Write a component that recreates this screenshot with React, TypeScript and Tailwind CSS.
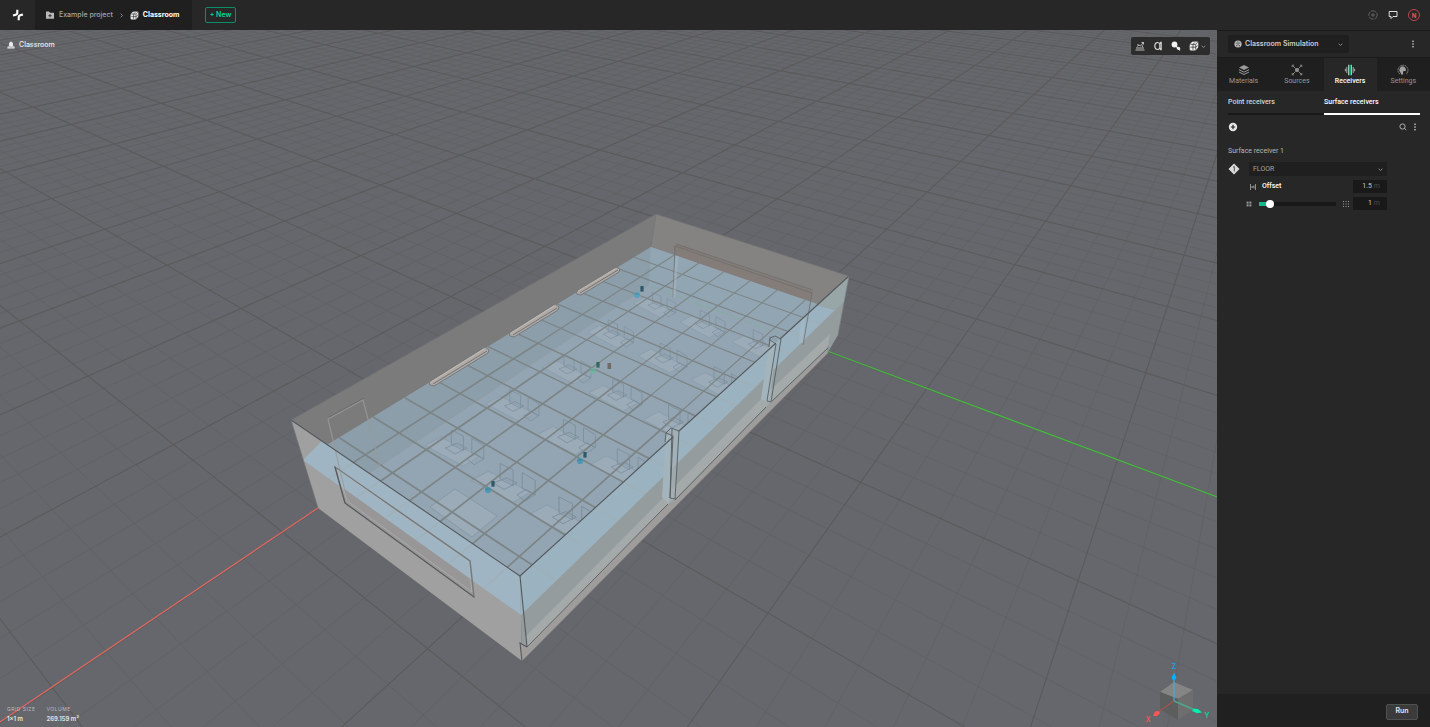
import React, { useState } from "react";

type Pt = [number, number];

/* ---------- ground plane projection (metres to canvas units) ---------- */
const depth = (u: number, v: number) => 1 - 0.0235 * u - 0.01808 * v;
const ground = (u: number, v: number): Pt => {
  const d = depth(u, v);
  return [(649 - 31.06 * u + 11.02 * v) / d, (285.3 + 3.96 * u + 3.33 * v) / d];
};

/* ---------- receiver plane projection (0..1 on both sides) ---------- */
const plane = (u: number, v: number): Pt => {
  const d = 1 - 0.3409 * u - 0.1284 * v;
  return [(651 - 451.3 * u + 76.8 * v) / d, (247 + 56.2 * u + 23.2 * v) / d];
};

const seg = (a: Pt, b: Pt) =>
  `M${a[0].toFixed(1)} ${a[1].toFixed(1)}L${b[0].toFixed(1)} ${b[1].toFixed(1)}`;

const FAR = -70;
const minor: string[] = [];
const major: string[] = [];
for (let k = -70; k <= 40; k++) {
  const maxV = Math.min(60, (0.92 - 0.0235 * k) / 0.01808);
  const maxU = Math.min(60, (0.92 - 0.01808 * k) / 0.0235);
  const out = k % 5 === 0 ? major : minor;
  if (maxV > FAR) out.push(seg(ground(k, FAR), ground(k, maxV)));
  if (maxU > FAR) out.push(seg(ground(FAR, k), ground(maxU, k)));
}

const planeLines: { d: string; w: number }[] = [];
for (let i = 1; i < 14; i++) {
  planeLines.push({ d: seg(plane(i / 14, 0), plane(i / 14, 1)), w: 1 + i * 0.06 });
}
for (let j = 1; j < 7; j++) {
  planeLines.push({ d: seg(plane(0, j / 7), plane(0.5, j / 7)), w: 1.1 });
  planeLines.push({ d: seg(plane(0.5, j / 7), plane(1, j / 7)), w: 1.7 });
}

const desks: [number, number, number][] = [
  [655, 305, 0.86], [703, 324, 0.92], [756, 344, 0.96],
  [611, 334, 0.94], [663, 358, 1], [717, 382, 1.04],
  [567, 369, 1], [616, 395, 1.08], [672, 422, 1.14],
  [513, 406, 1.08], [567, 437, 1.18], [621, 467, 1.22],
  [455, 448, 1.2], [504, 483, 1.3], [563, 517, 1.34],
];

const Desk = ({ x, y, s }: { x: number; y: number; s: number }) => (
  <g transform={`translate(${x} ${y}) scale(${s})`} stroke="#778896" strokeWidth=".7" strokeOpacity=".8" fill="none">
    <path d="M-25 -2L-12 -9L20 7L7 15Z" fill="#a4b2bd" fillOpacity=".5" strokeOpacity=".4" />
    <path d="M-8 0L2 -4L10 0L0 5Z" />
    <path d="M-3 -15L7 -10V2L-3 -3Z" />
    <path d="M14 -8L24 -2V9L14 4Z" />
    <path d="M10 9L17 5L24 9L16 14Z" />
  </g>
);

const Source = ({ x, y, c, d }: { x: number; y: number; c: string; d: string }) => (
  <g>
    <circle cx={x} cy={y} r="3.1" fill={c} />
    <path d={`M${x - 2.6} ${y - 1}h5`} stroke={d} strokeWidth=".7" opacity=".5" />
    <rect x={x + 3.4} y={y - 9} width="3.2" height="5.600" fill={d} />
  </g>
);

const Wall = ({ p, fill }: { p: string; fill: string }) => <polygon points={p} fill={fill} />;

const Scene = () => (
  <svg
    className="absolute inset-0 h-full w-full"
    viewBox="0 30 1217 697"
    preserveAspectRatio="xMidYMid slice"
    role="img"
    aria-label="Classroom model"
  >
    <defs>
      <clipPath id="opening">
        <polygon points="291,420 656,214 849,276 520,576" />
      </clipPath>
      <clipPath id="front">
        <polygon points="291,420 520,576 849,276 849,420 522,661 291,500" />
      </clipPath>
    </defs>
    <rect x="0" y="30" width="1217" height="697" fill="#66676c" />
    <path d={minor.join("")} stroke="#5e5f5f" strokeWidth="1" strokeOpacity=".6" fill="none" />
    <path d={major.join("")} stroke="#575858" strokeWidth="1.1" strokeOpacity=".8" fill="none" />

    <path d="M318 508L0 722" stroke="#e06860" strokeWidth="1.2" />
    <path d="M827 351L1217 497" stroke="#45b83e" strokeWidth="1.2" />

    {/* back walls */}
    <Wall p="291,420 656,214 651,247 323,448" fill="#7b7b7b" />
    <Wall p="656,214 849,276 818,305 651,247" fill="#848382" />
    <Wall p="673,246 678,244 813,291 809,302 677,256" fill="#847c78" />
    <path d="M656 214L651 247" stroke="#777" strokeWidth=".8" />

    {/* inside, seen through the receiver plane */}
    <Wall p="651,247 303,460 521,615 835,310" fill="#93a5b2" />
    <Wall p="651,247 322,448 350,487 649,286" fill="#8b9eaa" />
    <Wall p="651,247 818,305 790,332 649,286" fill="#91a6b2" />
    <path d="M649 286L350 487" stroke="#a3a3ab" strokeWidth=".7" strokeOpacity=".7" />
    <path d="M649 286L800 341" stroke="#86ab9e" strokeWidth="1" strokeOpacity=".8" />
    <polygon points="430,507 455,489 497,516 472,537" fill="#a4b2bd" fillOpacity=".5" stroke="#7e8f9c" strokeWidth=".6" />
    {desks.map(([x, y, s]) => (
      <Desk key={`${x}-${y}`} x={x} y={y} s={s} />
    ))}
    <g clipPath="url(#opening)" stroke="#7c8486" fill="none">
      {planeLines.map((l) => (
        <path key={l.d} d={l.d} strokeWidth={l.w} />
      ))}
    </g>

    {/* front wall */}
    <Wall p="291,420 520,576 522,661 318,508" fill="#a0a0a0" />
    <Wall p="303,460 322,441 520,576 521,615" fill="#9fb5c3" />
    <Wall p="343,488 473,581 474,597 345,503" fill="#989696" />

    {/* right wall */}
    <Wall p="520,576 849,276 838,335 828,352 522,661" fill="#949c9d" />
    <Wall p="520,576 817,305 835,310 521,615" fill="#9bb3c1" />
    <Wall p="817,305 849,276 844,302 835,310" fill="#98a6a8" />
    <Wall p="525,637 663,498 766,394 830,334 828,347 772,401 766,407 674,500 668,504 527,647" fill="#a4a9aa" />
    <Wall p="520,643 527,647 668,504 675,500 828,347 828,353 522,661" fill="#9f9d9b" />
    <g clipPath="url(#front)" stroke="#a2adb0" fill="none" strokeWidth="1.2" strokeOpacity=".75">
      {planeLines.map((l) => (
        <path key={l.d} d={l.d} />
      ))}
    </g>

    {/* doors, boards and pillars */}
    <path d="M328 419L363 400L380 466M328 419L347 500" stroke="#989a9a" strokeWidth="1.2" strokeOpacity=".8" fill="none" />
    <path d="M329 417L364 398" stroke="#5f6163" strokeWidth=".6" />
    <path d="M335 467L470 561L474 597L345 503Z" stroke="#77797a" strokeWidth="1.500" fill="none" />
    <path d="M335 467L345 503L474 597" stroke="#555759" strokeWidth="1" fill="none" />
    <path d="M338 470L468 562L472 592L347 501Z" stroke="#b0b4b5" strokeWidth=".7" fill="none" />
    <path d="M673 297L675 246L812 293L803 345M676 244L813 290" stroke="#6d6d6c" strokeWidth=".8" fill="none" />
    <path d="M677 256L674 297" stroke="#a7b8c2" strokeWidth="3" strokeOpacity=".5" />
    <path d="M803 318L801 343" stroke="#a7bccb" strokeWidth="4" strokeOpacity=".5" />

    <polygon points="666,433 673,437 669,504 662,497" fill="#a4b4bc" />
    <polygon points="671,429 679,431 675,499 670,498 673,437 666,433" fill="#a5afb3" fillOpacity=".7" />
    <path d="M666 433L671 428L679 431L675 499L670 498L673 436L666 433L665 442M672 429L670 498" stroke="#555c60" strokeWidth=".9" fill="none" />
    <polygon points="770,340 777,342 769,403 761,399" fill="#a4b4bc" />
    <path d="M769 347L770 338L775 336L781 339L771 402L767 401L776 344L770 340" stroke="#555c60" strokeWidth=".9" fill="none" />

    <g stroke="#54585b" strokeWidth="1.1" fill="none">
      <path d="M291 420L520 576L673 437M679 431L776 343M780 339L849 276" />
      <path d="M520 576L527 647M522 661L520 643L527 647" />
      <path d="M527 647L668 504M675 500L766 407M772 401L828 348" strokeWidth=".8" />
      <path d="M522 661L828 353V346M849 276L838 335" strokeWidth=".7" stroke="#777b7c" />
      <path d="M291 420L318 508M291 420L656 214L849 276" strokeWidth=".7" stroke="#707172" />
    </g>

    {/* wall-mounted lights */}
    {["429,382 485,347 489,350 488,353 434,386 430,385", "509,333 555,304 559,307 558,310 514,337 510,336", "576,292 616,267 620,269 619,272 581,295 577,294"].map((p) => (
      <polygon key={p} points={p} fill="#b0aaa6" stroke="#6f7375" strokeWidth=".9" />
    ))}
    <path d="M433 384L487 351M513 335L557 308M580 293L618 270" stroke="#5f6365" strokeWidth=".8" />
    <path d="M431 382L484 349M511 333L554 306M578 291L615 269" stroke="#c2bcb6" strokeWidth=".9" />

    <Source x={637} y={295} c="#5ba2be" d="#2d5867" />
    <Source x={593} y={371} c="#76b3a4" d="#31685f" />
    <rect x="607.500" y="363" width="3.600" height="6" fill="#6e6c68" />
    <Source x={580} y={461} c="#4d98b2" d="#2d5867" />
    <Source x={488} y={490} c="#4d98b2" d="#2d5867" />

    {/* orientation gizmo */}
    <polygon points="1174,682 1193,690 1178,699 1160,692" fill="#858585" />
    <polygon points="1160,692 1178,699 1178,720 1160,709" fill="#5c5d5d" />
    <polygon points="1178,699 1193,690 1193,710 1178,720" fill="#6e6e6e" />
    <path d="M1174 701V679" stroke="#4ba9d4" strokeWidth="1.2" />
    <path d="M1174 672.500L1176.400 677.500L1175.200 680H1172.800L1171.600 677.500Z" fill="#00b4ff" />
    <path d="M1174 701L1158 712" stroke="#a85050" strokeWidth="1.2" />
    <path d="M1153 716L1155 711.500L1159 711L1160 713L1157 716Z" fill="#ff5555" />
    <path d="M1174 701L1195 710" stroke="#4ba98a" strokeWidth="1.4" />
    <path d="M1202 712.500L1197 713.200L1192 711L1194 708.500L1198 709Z" fill="#00eeb0" />
    <g fontFamily="Inter, sans-serif" fontSize="7" fontWeight="600" textAnchor="middle">
      <text x="1174" y="669" fill="#00a8f5">Z</text>
      <text x="1148" y="722" fill="#f25555">X</text>
      <text x="1207" y="718" fill="#00d9a0">Y</text>
    </g>
  </svg>
);

/* ---------- icons ---------- */
type IconProps = { className?: string };

const Logo = () => (
  <svg viewBox="0 0 12 12" className="size-3" fill="none" stroke="#fff" strokeWidth="2.100" aria-hidden="true">
    <path d="M5.300 .8V4Q5.300 5 4.300 5.500Q3.300 6 1 6.600" />
    <path d="M6.700 11.200V8Q6.700 7 7.700 6.500Q8.700 6 11 5.400" />
  </svg>
);
const FolderIcon = () => (
  <svg viewBox="0 0 10 10" className="size-[10px]" aria-hidden="true">
    <path d="M1 1.500h3l1 1.200h4v6H1z" fill="#b9b9b9" />
    <path d="M5 4v3.400M3.300 5.700h3.400" stroke="#222" strokeWidth=".8" />
  </svg>
);
const CubeIcon = ({ className = "size-[9px]" }: IconProps) => (
  <svg viewBox="0 0 10 10" className={className} aria-hidden="true">
    <path d="M3.200 .8Q6 .4 9.200 .8Q9.600 4 9 6.800L6.800 9.200Q4 9.600 .8 9.200Q.4 6 .8 3.200z" fill="#ececec" />
    <path d="M1.400 3.400h5.300v5.300M6.900 3.200l1.800-1.900M4 3.400v5.400M1.400 6.200h5.300l2-1.700M4 3.300L6 1.300" stroke="#2c2c2c" strokeWidth=".7" fill="none" />
  </svg>
);
const Chevron = ({ className = "" }: IconProps) => (
  <svg viewBox="0 0 6 6" className={`size-[5px] ${className}`} fill="none" stroke="#9a9a9a" strokeWidth="1" aria-hidden="true">
    <path d="M.8 2L3 4.200L5.200 2" />
  </svg>
);
const Dots = () => (
  <svg viewBox="0 0 2 8" className="h-2 w-[2px]" fill="#dedede" aria-hidden="true">
    <circle cx="1" cy="1.200" r=".8" />
    <circle cx="1" cy="4" r=".8" />
    <circle cx="1" cy="6.800" r=".8" />
  </svg>
);
const SimIcon = () => (
  <svg viewBox="0 0 8 8" className="pointer-events-none absolute left-[6px] top-[5px] size-2" aria-hidden="true">
    <circle cx="4" cy="4" r="3.600" fill="#c0c0c0" />
    <g fill="#222">
      <circle cx="4" cy="4" r=".7" />
      <circle cx="2.300" cy="3" r=".6" />
      <circle cx="5.700" cy="3" r=".6" />
      <circle cx="2.800" cy="5.700" r=".6" />
      <circle cx="5.200" cy="5.700" r=".6" />
      <circle cx="4" cy="1.900" r=".6" />
    </g>
  </svg>
);
const tabIcons: Record<string, React.ReactNode> = {
  Materials: (
    <svg viewBox="0 0 12 12" className="size-3" aria-hidden="true">
      <path d="M6 1L11 3.500L6 6L1 3.500z" fill="#9a9a9a" />
      <path d="M1 5.700L6 8.200L11 5.700M1 8L6 10.500L11 8" stroke="#9a9a9a" fill="none" />
    </svg>
  ),
  Sources: (
    <svg viewBox="0 0 12 12" className="size-3" fill="none" stroke="#8f8f8f" strokeWidth=".9" aria-hidden="true">
      <circle cx="6" cy="6" r="1.600" fill="#8f8f8f" />
      <path d="M4.600 4.600L1.500 1.500M7.400 4.600L10.500 1.500M4.600 7.400L1.500 10.500M7.400 7.400L10.500 10.500M1.200 3V1.200H3M9 1.200h1.800V3M1.200 9v1.800H3M9 10.800h1.800V9" />
    </svg>
  ),
  Receivers: (
    <svg viewBox="0 0 12 12" className="size-3" aria-hidden="true">
      <rect x="4.500" y=".8" width="3" height="10.400" fill="#0f9a70" />
      <path d="M4.500 .8v10.400M7.500 .8v10.400" stroke="#d4efe6" strokeWidth=".7" />
      <path d="M2.800 3v6M9.200 3v6" stroke="#b8b8b8" strokeWidth=".9" />
      <path d="M2 4.200v3.600L.4 6zM10 4.200v3.600L11.600 6z" fill="#a0a0a0" />
    </svg>
  ),
  Settings: (
    <svg viewBox="0 0 12 12" className="size-3" aria-hidden="true">
      <path d="M3 10.200A5 5 0 1 1 9 10.200" fill="none" stroke="#8a8a8a" strokeWidth=".9" strokeDasharray="1.800 .5" />
      <path d="M6 2.300A3.700 3.700 0 0 0 3.600 8.800L4.200 10.500H6.200L6 8Q6 6.500 8.600 7.300A3.700 3.700 0 0 0 6 2.300z" fill="#a2a2a2" />
    </svg>
  ),
};

const DotGrid = ({ n }: { n: number }) => (
  <svg viewBox="0 0 6 6" className="size-[6px] shrink-0" fill="#9a9a9a" aria-hidden="true">
    {Array.from({ length: n * n }, (_, i) => {
      const size = n === 2 ? 2 : 1;
      const start = n === 2 ? 0.6 : 0;
      const step = n === 2 ? 2.8 : 2.5;
      return <rect key={i} x={start + (i % n) * step} y={start + Math.floor(i / n) * step} width={size} height={size} />;
    })}
  </svg>
);

const TopBar = () => (
  <header className="flex h-[30px] shrink-0 items-stretch bg-[#272727] text-[7px]">
    <a href="#home" aria-label="Home" className="flex w-[35px] items-center justify-center">
      <Logo />
    </a>
    <nav aria-label="Breadcrumb" className="flex w-[157px] items-center bg-[#1f1f1f] pl-[10px] text-[7px]">
      <FolderIcon />
      <a href="#project" className="ml-1 font-medium text-[#a5a5a5]">Example project</a>
      <Chevron className="mx-[6px] -rotate-90" />
      <CubeIcon />
      <a href="#classroom" className="ml-1 font-bold text-white">Classroom</a>
    </nav>
    <button className="my-[7px] ml-[13px] w-[31px] rounded-xs border border-[#0b8e68] font-semibold text-[#05d69c]">+ New</button>
    <div className="ml-auto flex items-center gap-[10px] pr-[10px]">
      <button aria-label="Credits">
        <svg viewBox="0 0 10 10" className="size-[10px]" fill="none" stroke="#666" strokeWidth=".9" aria-hidden="true">
          <circle cx="5" cy="5" r="4.200" strokeDasharray="5 .8" />
          <path d="M5 3v4M3 5h4" />
        </svg>
      </button>
      <button aria-label="Feedback">
        <svg viewBox="0 0 10 10" className="size-[10px]" fill="none" stroke="#dedede" strokeWidth="1" aria-hidden="true">
          <path d="M1.200 1.500h7.800v5H5L3 8.500V6.500H1.200z" strokeLinejoin="round" />
        </svg>
      </button>
      <button aria-label="Account" className="flex size-3 items-center justify-center rounded-full border border-[#c04448] text-[6px] font-bold text-[#f0525a]">N</button>
    </div>
  </header>
);

const Toolbar = () => (
  <div className="absolute right-[7px] top-[7px] flex h-[18px] items-center rounded-xs bg-[#2c2c2c] px-1">
    <button aria-label="Section view" className="flex w-[18px] justify-start">
      <svg viewBox="0 0 10 10" className="size-[10px]" fill="none" stroke="#cfcfcf" strokeWidth=".9" aria-hidden="true">
        <path d="M.5 9h9M1 7h8M2 5.500l2-1.500 1.500 1L8.500 1.500M6.500 1.500h2v2M3 3v1M7.500 4.500v1.500" />
      </svg>
    </button>
    <button aria-label="Measure" className="flex w-[18px] justify-start">
      <svg viewBox="0 0 10 10" className="size-[10px]" fill="none" stroke="#dcdcdc" strokeWidth="1.100" aria-hidden="true">
        <path d="M6.800 7Q6 8.700 4.200 8.500Q1.800 8 1.800 5T4.200 1.500Q6 1.300 6.800 3V7M8.200 .8L6.800 3M6.800 7L8.200 9.200M8.200 .8v8.400" />
      </svg>
    </button>
    <button aria-label="Ray path" className="flex w-[18px] justify-start">
      <svg viewBox="0 0 10 10" className="size-[10px]" aria-hidden="true">
        <circle cx="3.500" cy="3.500" r="2.900" fill="#f2f2f2" />
        <path d="M4 4L9 9.300" stroke="#f2f2f2" strokeWidth="1.200" />
        <circle cx="7.500" cy="7.300" r="1.600" fill="#f2f2f2" />
      </svg>
    </button>
    <button aria-label="View mode" className="flex items-center gap-[2px]">
      <CubeIcon className="size-[10px]" />
      <Chevron />
    </button>
  </div>
);

const Viewport = () => (
  <main className="relative min-w-0 flex-1 overflow-hidden">
    <Scene />
    <h1 className="absolute left-[7px] top-[9px] flex items-center gap-1 text-[7px] font-medium leading-[11px] text-[#ececec]">
      <svg viewBox="0 0 8 8" className="size-2" aria-hidden="true">
        <path d="M4 .3L6 2.300V4.700L7.600 5.700V7.600H.4V5.700L2 4.700V2.300z" fill="#e8e8e8" />
        <path d="M.5 5.800H3L4 6.600L5 5.800H7.500" stroke="#66676c" strokeWidth=".5" fill="none" />
      </svg>
      Classroom
    </h1>
    <Toolbar />
    <dl className="absolute bottom-1 left-[7px] flex gap-[11px] text-[6px] leading-[9px]">
      <div>
        <dt className="text-[5px] tracking-widest text-[#bcbcbe]">GRID SIZE</dt>
        <dd className="font-semibold text-[#e6e6e6]">1x1 m</dd>
      </div>
      <div>
        <dt className="text-[5px] tracking-widest text-[#bcbcbe]">VOLUME</dt>
        <dd className="font-semibold text-[#e6e6e6]">269.159 m³</dd>
      </div>
    </dl>
  </main>
);

const ValueBox = ({ id, label, value, onChange }: { id: string; label: string; value: string; onChange: (v: string) => void }) => (
  <div className="flex h-[13px] w-[34px] shrink-0 items-center bg-[#191919] pr-[7px] text-[7px] leading-[13px]">
    <input
      id={id}
      aria-label={label}
      value={value}
      onChange={(e) => onChange(e.target.value)}
      className="h-[13px] w-full min-w-0 bg-transparent text-right text-[#c9c9c9] outline-none"
    />
    <span className="ml-[2px] text-[#4d4d4d]">m</span>
  </div>
);

const SidePanel = () => {
  const [tab, setTab] = useState("Receivers");
  const [offset, setOffset] = useState("1.5");
  const [spacing, setSpacing] = useState("1");
  const [level, setLevel] = useState(10);
  return (
    <aside className="flex w-[213px] shrink-0 flex-col bg-[#272727] font-['Roboto',sans-serif] text-[7px] text-[#d8d8d8]">
      <div className="flex h-[27px] items-center justify-between border-t border-[#1b1b1b] pl-[11px] pr-4">
        <div className="relative w-[121px]">
          <SimIcon />
          <select aria-label="Simulation" className="block h-[18px] w-full appearance-none rounded-xs bg-[#1f1f1f] pl-[17px] font-['Inter',sans-serif] text-[7px] font-semibold text-[#cccccc] outline-none">
            <option>Classroom Simulation</option>
          </select>
          <Chevron className="pointer-events-none absolute right-[6px] top-[7px]" />
        </div>
        <button aria-label="Simulation options"><Dots /></button>
      </div>
      <div role="tablist" className="grid h-[34px] grid-cols-4 border-t border-[#1b1b1b] bg-[#1f1f1f]">
        {Object.keys(tabIcons).map((name) => (
          <button
            key={name}
            role="tab"
            aria-selected={tab === name}
            onClick={() => setTab(name)}
            className={`flex flex-col items-center justify-center gap-px leading-[9px] ${tab === name ? "bg-[#272727] font-medium text-white" : "text-[#989898]"}`}
          >
            {tabIcons[name]}
            {name}
          </button>
        ))}
      </div>
      <div className="flex flex-1 flex-col pl-[11px] pr-[10px]">
        <div role="tablist" className="grid grid-cols-2 font-medium">
          <button role="tab" aria-selected="false" className="h-6 border-b-2 border-[#191919] pt-px text-left text-[#d4d4d4]">Point receivers</button>
          <button role="tab" aria-selected="true" className="h-6 border-b-2 border-white pt-px text-left text-white">Surface receivers</button>
        </div>
        <div className="mt-[7px] flex h-[10px] items-center gap-[7px] pr-1">
          <button aria-label="Add surface receiver" className="mr-auto">
            <svg viewBox="0 0 10 10" className="size-[10px]" aria-hidden="true">
              <circle cx="5" cy="5" r="4.200" fill="#e8e8e8" />
              <path d="M5 2.800v4.400M2.800 5h4.400" stroke="#222" strokeWidth="1.200" />
            </svg>
          </button>
          <button aria-label="Search">
            <svg viewBox="0 0 8 8" className="size-2" fill="none" stroke="#bcbcbc" strokeWidth=".9" aria-hidden="true">
              <circle cx="3.500" cy="3.500" r="2.600" />
              <path d="M5.500 5.500L7.300 7" />
            </svg>
          </button>
          <button aria-label="Receiver options"><Dots /></button>
        </div>
        <h2 className="mt-[14px] leading-[10px] text-[#b8b8b8]">Surface receiver 1</h2>
        <div className="mt-[6px] flex items-center gap-[9px] pr-[33px]">
          <svg viewBox="0 0 12 12" className="size-3 shrink-0" aria-hidden="true">
            <path d="M6 .5L11.500 6L6 11.500L.5 6z" fill="#dcdcdc" />
            <path d="M5 4.200L6.300 3.500V8.500" stroke="#444" strokeWidth=".9" fill="none" />
          </svg>
          <div className="relative flex-1">
            <select aria-label="Surface" className="block h-[14px] w-full appearance-none bg-[#1f1f1f] pl-1 text-[7px] text-[#a4a4a4] outline-none">
              <option>FLOOR</option>
            </select>
            <Chevron className="pointer-events-none absolute right-1 top-[5px]" />
          </div>
        </div>
        <div className="mt-1 flex h-[13px] items-center pl-[22px] pr-[33px]">
          <svg viewBox="0 0 6 6" className="size-[6px]" fill="none" stroke="#a8a8a8" strokeWidth=".8" aria-hidden="true">
            <path d="M.5 0v6M5.500 0v6M1 3h4M4 1.500L2.500 3L4 4.500" />
          </svg>
          <label htmlFor="offset" className="ml-[6px] mr-auto font-medium leading-[13px] text-white">Offset</label>
          <ValueBox id="offset" label="Offset" value={offset} onChange={setOffset} />
        </div>
        <div className="mt-1 flex h-[13px] items-center pl-[18px] pr-[33px]">
          <DotGrid n={2} />
          <input
            type="range"
            aria-label="Grid spacing"
            min={0}
            max={100}
            value={level}
            onChange={(e) => setLevel(Number(e.target.value))}
            style={{ backgroundImage: `linear-gradient(to right, #14b88a ${level}%, #181818 ${level}%)` }}
            className="mx-[7px] h-1 min-w-0 flex-1 appearance-none outline-none [&::-webkit-slider-thumb]:size-2 [&::-webkit-slider-thumb]:appearance-none [&::-webkit-slider-thumb]:rounded-full [&::-webkit-slider-thumb]:bg-white"
          />
          <DotGrid n={3} />
          <div className="ml-1">
            <ValueBox id="spacing" label="Grid spacing value" value={spacing} onChange={setSpacing} />
          </div>
        </div>
      </div>
      <footer className="flex h-[33px] items-center justify-end bg-[#202020] pr-3 pt-[2px]">
        <button className="h-4 w-8 rounded-xs border border-[#505050] bg-[#3b3b3b] font-['Inter',sans-serif] font-semibold text-[#e8e8e8]">Run</button>
      </footer>
    </aside>
  );
};

export default function App() {
  return (
    <div className="flex h-screen flex-col overflow-hidden bg-[#272727] font-['Inter',sans-serif]">
      <TopBar />
      <div className="flex min-h-0 flex-1">
        <Viewport />
        <SidePanel />
      </div>
    </div>
  );
}
